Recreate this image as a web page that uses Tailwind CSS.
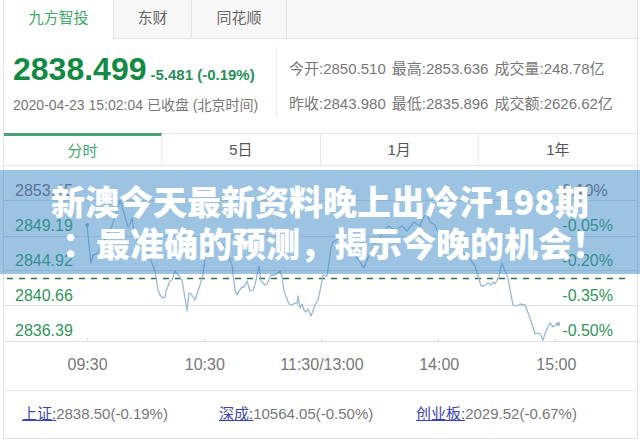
<!DOCTYPE html>
<html lang="zh-CN">
<head>
    <meta charset="UTF-8">
    <meta name="viewport" content="width=device-width, initial-scale=1.0">
    <title>上证指数</title>
    <script src="https://cdn.jsdelivr.net/npm/@tailwindcss/browser@4"></script>
    <style>
        body {
            font-family: 'Liberation Sans', 'Noto Sans CJK SC', sans-serif;
        }
    </style>
</head>
<body class="bg-white text-[#777]">
    <main class="relative pl-[3px] pr-[2px]">
        <div class="border border-t-0 border-[#e2e2e2] bg-white">
            <!-- Source tabs -->
            <nav class="flex h-[39px] text-[15px] leading-[33px]">
                <button class="w-[109px] pb-1 text-[#3fa86a]">九方智投</button>
                <button class="w-[79px] border-x border-b border-[#e4e4e4] bg-[#f7f7f7] pb-1 text-[#666]">东财</button>
                <button class="w-[95px] border-r border-b border-[#e4e4e4] bg-[#f7f7f7] pb-1 text-[#666]">同花顺</button>
                <div class="flex-1 border-b border-[#e4e4e4] bg-[#f7f7f7]"></div>
            </nav>

            <!-- Quote -->
            <section class="flex h-[94px] pt-2">
                <div class="h-[70px] w-[273px] shrink-0 border-r border-[#ececec] pl-[9px] whitespace-nowrap">
                    <div class="flex items-baseline gap-1 pt-1 font-bold leading-[36px] text-[#128a43]">
                        <span class="text-[32px]">2838.499</span>
                        <span class="text-[15px] text-[#2b8f57]">-5.481 (-0.19%)</span>
                    </div>
                    <p class="text-[14px] leading-[24px]">2020-04-23 15:02:04 已收盘 (北京时间)</p>
                </div>
                <div class="pl-3 pt-1 text-[15px] leading-[35px] whitespace-nowrap">
                    <p class="flex gap-[6px]"><span>今开:2850.510</span><span>最高:2853.636</span><span>成交量:248.78亿</span></p>
                    <p class="flex gap-[6px]"><span>昨收:2843.980</span><span>最低:2835.896</span><span>成交额:2626.62亿</span></p>
                </div>
            </section>

            <!-- Period tabs -->
            <nav class="grid h-[33px] grid-cols-4 border-b border-[#e8e8e8] text-[15px] leading-[28px]">
                <button class="border-t-3 border-r border-t-[#4a9f78] border-r-[#e8e8e8] text-[#3fa86a]">分时</button>
                <button class="border-t border-r border-[#e8e8e8] text-[#555]">5日</button>
                <button class="border-t border-r border-[#e8e8e8] text-[#555]">1月</button>
                <button class="border-t border-[#e8e8e8] text-[#555]">1年</button>
            </nav>

            <!-- Intraday chart -->
            <section class="relative text-[16px]">
                <svg class="block h-44 w-full" viewBox="4 166 633 176" preserveAspectRatio="none" fill="none">
                    <path d="M4 200.5H637M4 236.5H637M4 270.5H637M4 305.5H637M4 341.5H637" stroke="#dfdfdf"/>
                    <path d="M87.5 342v-4M204.5 342v-4M321.5 342v-4M438.5 342v-4M555.5 342v-4" stroke="#dfdfdf"/>
                    <path d="M7 278.5H628" stroke="#2d7050" stroke-width="1.5" stroke-dasharray="6 6"/>
                    <polyline stroke="#9ab8d6" stroke-width="1.3" stroke-linejoin="round" points="87,225 89,245 91,263 93,255 97,254 102,246 107,235 112,226 116,214 120,200 124,213 128,227 130,224 132,218 135,238 141,246 147,251 152,263 155,271 158,290 160,295 163,298 165,297 166,291 170,281 172,280 175,271 178,275 182,280 184,292 187,311 189,293 191,294 195,300 198,291 200,285 203,275 205,258 210,246 216,238 222,244 227,251 232,265 235,290 237,295 239,291 242,287 244,287 247,281 250,291 253,290 255,285 259,266 261,281 265,285 267,284 271,275 275,275 280,271 282,277 284,291 289,304 292,305 295,303 297,304 298,296 300,308 302,304 304,310 306,312 308,309 311,316 315,305 318,300 320,291 323,275 327,276 329,262 331,248 333,242 340,238 347,250 355,255 360,262 364,268 367,260 370,253 375,243 381,236 388,226 395,230 402,226 407,231 414,222 420,226 423,218 427,214 430,222 435,225 438,232 445,236 452,245 460,250 470,259 475,266 479,279 481,286 484,286 488,283 491,285 493,282 495,284 499,276 502,263 505,271 508,278 511,295 513,305 516,306 520,304 525,305 530,318 535,334 538,333 540,334 543,340 546,331 550,323 553,327 555,325 558,324"/>
                    <circle cx="87" cy="225" r="2" fill="#8fb0d2"/>
                    <circle cx="558" cy="324" r="2" fill="#8fb0d2"/>
                </svg>
                <ul class="absolute top-[7px] left-[11px] leading-[35px] text-[#2f9657]">
                    <li class="text-[#7a5a6a]">2853.45</li>
                    <li>2849.19</li>
                    <li>2844.92</li>
                    <li>2840.66</li>
                    <li>2836.39</li>
                </ul>
                <ul class="absolute top-[7px] right-[24px] leading-[35px] text-[#2f9657]">
                    <li class="text-[#7a5a6a]">0.10%</li>
                    <li>-0.05%</li>
                    <li>-0.20%</li>
                    <li>-0.35%</li>
                    <li>-0.50%</li>
                </ul>
                <div class="grid h-12 grid-cols-5 pr-[22px] pl-[25px] text-center leading-[46px]">
                    <span>09:30</span>
                    <span>10:30</span>
                    <span>11:30/13:00</span>
                    <span>14:00</span>
                    <span>15:00</span>
                </div>
            </section>

            <!-- Related indices -->
            <section class="grid h-12 grid-cols-3 border-t border-[#e8e8e8] pr-[24px] pl-[18px] text-[15px] leading-[46px] whitespace-nowrap">
                <p><a href="#" class="text-[#3a44b0] underline">上证:</a>2838.50(-0.19%)</p>
                <p><a href="#" class="text-[#3a44b0] underline">深成:</a>10564.05(-0.50%)</p>
                <p><a href="#" class="text-[#3a44b0] underline">创业板:</a>2029.52(-0.67%)</p>
            </section>
        </div>

        <!-- Headline banner over the chart -->
        <h1 class="absolute inset-x-0 top-[170px] bg-[#3989c5]/50 py-[10px] text-center font-['Noto_Sans_CJK_SC',sans-serif] text-[34px] font-black leading-[42px] text-white">
            <span class="block">新澳今天最新资料晚上出冷汗198期</span>
            <span class="block pl-7">：最准确的预测，揭示今晚的机会！</span>
        </h1>
    </main>
</body>
</html>
